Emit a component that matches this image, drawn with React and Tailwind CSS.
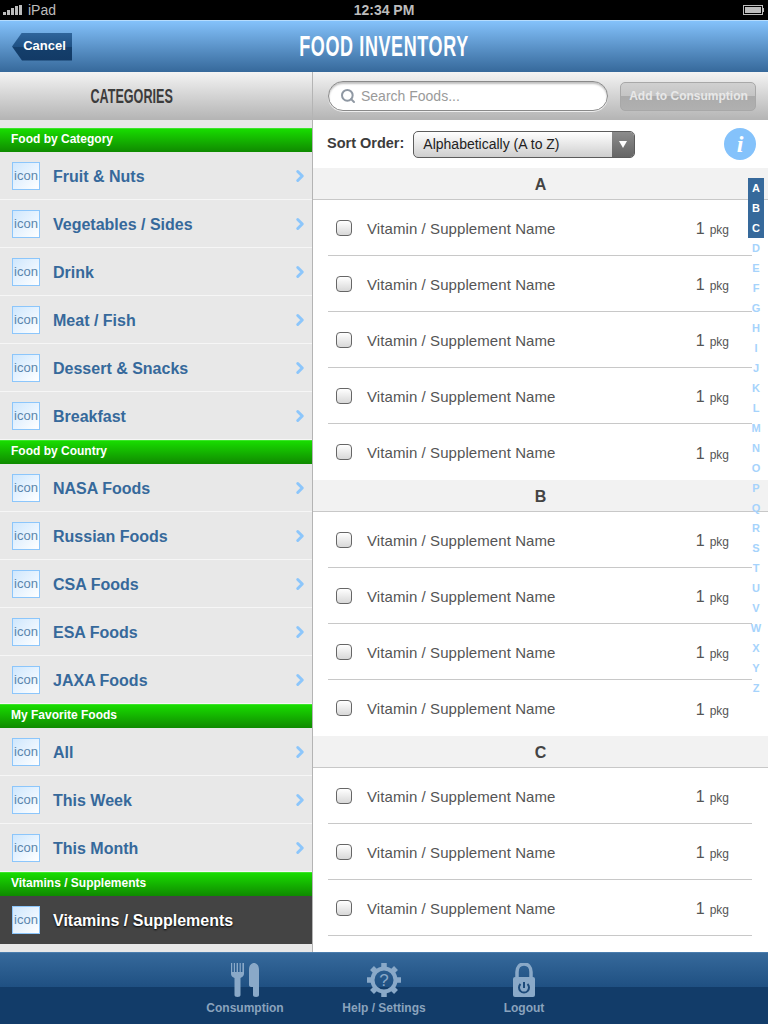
import React from "react";
import { Search, ChevronRight } from "lucide-react";

const font = "font-['Liberation_Sans',Arial,sans-serif]";

const sidebar = [
  { title: "Food by Category", items: ["Fruit & Nuts", "Vegetables / Sides", "Drink", "Meat / Fish", "Dessert & Snacks", "Breakfast"] },
  { title: "Food by Country", items: ["NASA Foods", "Russian Foods", "CSA Foods", "ESA Foods", "JAXA Foods"] },
  { title: "My Favorite Foods", items: ["All", "This Week", "This Month"] },
];

const sections = [
  { letter: "A", rows: 5, closed: false },
  { letter: "B", rows: 4, closed: false },
  { letter: "C", rows: 3, closed: true },
];

const letters = "ABCDEFGHIJKLMNOPQRSTUVWXYZ".split("");

const IconBox = () => (
  <div className="w-[28px] h-[28px] shrink-0 border border-[#8cc6fb] bg-gradient-to-br from-[#cfe7fd] to-white flex items-center justify-center text-[13px] text-[#5b86ad]">
    icon
  </div>
);

const SectionBar = ({ title }) => (
  <div className="h-[24px] shrink-0 pl-[11px] pb-[3px] flex items-center border-t border-[#3be52a] bg-gradient-to-b from-[#18dc00] to-[#0f8a00] text-[12px] font-bold text-white">
    {title}
  </div>
);

const CategoryRow = ({ label }) => (
  <div className="h-[48px] flex items-center pl-[12px] pr-[3px] border-b border-[#f6f6f6]">
    <IconBox />
    <span className="ml-[13px] mt-[2px] flex-1 text-[16px] font-bold text-[#36699b]">{label}</span>
    <ChevronRight size={18} strokeWidth={4} className="text-[#8cc6fb]" />
  </div>
);

const FoodRow = ({ divider }) => (
  <div className={`h-[56px] ml-[15px] mr-[16px] flex items-center text-[#555] ${divider ? "border-b border-[#c8c8c8]" : ""}`}>
    <div className="ml-[8px] w-[16px] h-[16px] rounded-[4px] border border-[#666] bg-gradient-to-b from-white to-[#d8d8d8]" />
    <span className="ml-[15px] mt-[3px] flex-1 text-[15px] tracking-[0.08px]">Vitamin / Supplement Name</span>
    <span className="text-[16px] mt-[3px]">1</span>
    <span className="ml-[5px] mr-[23px] text-[12px] mt-[5px]">pkg</span>
  </div>
);

const ForkKnife = () => (
  <svg width="28" height="34" viewBox="0 0 28 34" fill="#8aa9c8">
    <path d="M0 0h1.200v9h1.600V0H4v9h1.600V0H7v9h1.600V0h1.200v9h1.600V0H13v11c0 2-2 3-3.500 4v17c0 1-1 2-3 2s-3-1-3-2V15C1.500 14 0 13 0 11z" />
    <path d="M18 7c0-5 2.500-7 5-7s5 2 5 7v25c0 1-1 2-3 2s-3-1-3-2V24h-2c-1 0-2-1-2-2z" />
  </svg>
);

const Gear = () => (
  <svg width="36" height="36" viewBox="0 0 36 36">
    <path d="M18 1v6M18 29v6M1 18h6M29 18h6M6 6l4 4M30 6l-4 4M6 30l4-4M30 30l-4-4" stroke="#8aa9c8" strokeWidth="5.500" />
    <circle cx="18" cy="18" r="11.500" fill="none" stroke="#8aa9c8" strokeWidth="4" />
    <text x="18" y="24" textAnchor="middle" fontSize="17" fontFamily="Liberation Sans" fill="#8aa9c8">?</text>
  </svg>
);

const Lock = () => (
  <svg width="24" height="34" viewBox="0 0 24 34">
    <path d="M5 15V9c0-5 3-8 7-8s7 3 7 8v6" fill="none" stroke="#8aa9c8" strokeWidth="3.500" />
    <rect x="1" y="14" width="22" height="20" rx="2" fill="#8aa9c8" />
    <path d="M8.500 21a5 5 0 1 0 7 0" fill="none" stroke="#1c4a7a" strokeWidth="2" />
    <path d="M12 19v6" stroke="#1c4a7a" strokeWidth="2" />
  </svg>
);

const TabItem = ({ width, label, children }) => (
  <div className={`flex flex-col items-center ${width}`}>
    <div className="h-[36px] flex items-center">{children}</div>
    <span className="mt-[1px] text-[12px] font-bold text-[#8aa3bd]">{label}</span>
  </div>
);

export default function App() {
  return (
    <div className={`${font} relative w-[768px] h-[1024px] overflow-hidden flex flex-col bg-white`}>
      {/* status bar */}
      <div className="h-[20px] shrink-0 bg-black flex items-center justify-between px-[3px] text-[14px] text-[#bcbcbc] relative">
        <div className="flex items-center">
          <div className="flex items-end gap-[1px] h-[10px]">
            <div className="w-[3px] h-[3px] bg-[#bcbcbc]" />
            <div className="w-[3px] h-[5px] bg-[#bcbcbc]" />
            <div className="w-[3px] h-[7px] bg-[#bcbcbc]" />
            <div className="w-[3px] h-[9px] bg-[#bcbcbc]" />
            <div className="w-[3px] h-[10px] bg-[#bcbcbc]" />
          </div>
          <span className="ml-[6px]">iPad</span>
        </div>
        <span className="absolute left-0 right-0 text-center font-bold">12:34 PM</span>
        <div className="flex items-center mr-[1px]">
          <div className="w-[20px] h-[10px] border border-[#bcbcbc] p-[1px]">
            <div className="w-full h-full bg-[#bcbcbc]" />
          </div>
          <div className="w-[1px] h-[4px] bg-[#bcbcbc]" />
        </div>
      </div>

      {/* nav bar */}
      <div className="h-[52px] shrink-0 relative flex items-center border-t border-[#b5dcfd] bg-gradient-to-b from-[#84c2fb] to-[#36699b]">
        <div className="ml-[12px] w-[60px] h-[28px] pl-[5px] pb-[2px] flex items-center justify-center [clip-path:polygon(0_50%,10px_0,100%_0,100%_100%,10px_100%)] bg-[linear-gradient(#2f659b,#1e5083_50%,#143f6c_50%,#123a66)] text-[13px] font-bold text-white">
          Cancel
        </div>
        <div className="absolute left-0 right-0 top-0 text-center text-[29px] font-bold text-white tracking-[1px] scale-x-[0.62] leading-[50px]">
          FOOD INVENTORY
        </div>
      </div>

      <div className="flex-1 flex min-h-0">
        {/* left column */}
        <div className="w-[313px] shrink-0 flex flex-col bg-[#e8e8e8] border-r border-[#b4b4b4]">
          <div className="h-[48px] shrink-0 flex items-center justify-center pr-[49px] bg-gradient-to-b from-[#f4f4f4] to-[#b4b4b4]">
            <span className="text-[21px] font-bold text-[#3c3c3c] scale-x-[0.6]">CATEGORIES</span>
          </div>
          <div className="h-[8px] shrink-0" />
          {sidebar.map((group) => (
            <div key={group.title}>
              <SectionBar title={group.title} />
              {group.items.map((item) => (
                <CategoryRow key={item} label={item} />
              ))}
            </div>
          ))}
          <SectionBar title="Vitamins / Supplements" />
          <div className="h-[48px] shrink-0 flex items-center pl-[12px] bg-[#444444]">
            <IconBox />
            <span className="ml-[13px] mt-[2px] text-[16px] font-bold text-white [text-shadow:0_1px_2px_#000]">
              Vitamins / Supplements
            </span>
          </div>
        </div>

        {/* right column */}
        <div className="flex-1 min-w-0 flex flex-col">
          <div className="h-[48px] shrink-0 flex items-center pl-[15px] pr-[12px] bg-gradient-to-b from-[#f4f4f4] to-[#b4b4b4]">
            <div className="w-[280px] h-[30px] rounded-full bg-white border border-[#8a8a8a] shadow-[inset_0_2px_2px_rgba(0,0,0,0.25),0_1px_0_#eee] flex items-center pl-[11px] text-[14px] text-[#9a9a9a]">
              <Search size={16} strokeWidth={3} className="text-[#8f98a3]" />
              <span className="ml-[5px]">Search Foods...</span>
            </div>
            <div className="ml-[12px] w-[136px] h-[29px] rounded-[5px] border border-[#a8a8a8] bg-[linear-gradient(#d0d0d0,#c4c4c4_50%,#ababab_50%,#b0b0b0)] flex items-center justify-center pl-[1px] text-[12px] font-bold text-[#e8e8e8]">
              Add to Consumption
            </div>
          </div>

          <div className="h-[48px] shrink-0 flex items-center pl-[14px] pr-[12px]">
            <span className="text-[14.500px] font-bold text-[#3c3c3c]">Sort Order:</span>
            <div className="ml-[9px] w-[222px] h-[27px] flex rounded-[5px] border border-[#5c5c5c] overflow-hidden bg-gradient-to-b from-white to-[#cfcfcf]">
              <span className="flex-1 pl-[9px] text-[14px] leading-[25px] text-[#222]">Alphabetically (A to Z)</span>
              <div className="w-[22px] bg-gradient-to-b from-[#8c8c8c] to-[#666] flex items-center justify-center">
                <div className="w-0 h-0 border-x-[4px] border-x-transparent border-t-[7px] border-t-white" />
              </div>
            </div>
            <div className="ml-auto w-[32px] h-[32px] rounded-full bg-[#84c2fb] flex items-center justify-center font-['Liberation_Serif',serif] italic font-bold text-[24px] text-white">
              i
            </div>
          </div>

          <div className="flex-1 min-h-0 overflow-hidden">
            {sections.map((section) => (
              <div key={section.letter}>
                <div className="h-[32px] pt-[2px] flex items-center justify-center bg-[#f2f2f2] border-b border-[#c8c8c8] text-[16px] font-bold text-[#444]">
                  {section.letter}
                </div>
                {Array.from({ length: section.rows }).map((_, i) => (
                  <FoodRow key={i} divider={section.closed || i < section.rows - 1} />
                ))}
              </div>
            ))}
          </div>
        </div>
      </div>

      {/* alphabet index over the list */}
      <div className="absolute left-[748px] top-[178px] w-[16px] flex flex-col items-center text-[11px] font-bold leading-[20px] text-[#a6d3fc]">
        {letters.map((letter, i) => (
          <span key={letter} className={i < 3 ? "w-full text-center bg-[#36699b] text-white" : ""}>
            {letter}
          </span>
        ))}
      </div>

      {/* tab bar */}
      <div className="h-[72px] shrink-0 flex pt-[9px] pl-[168px] border-t border-[#4a7dae] bg-[linear-gradient(#36699b,#1f5082_48%,#123c69_48%,#123c69)]">
        <TabItem width="w-[154px]" label="Consumption"><ForkKnife /></TabItem>
        <TabItem width="w-[124px]" label="Help / Settings"><Gear /></TabItem>
        <TabItem width="w-[156px]" label="Logout"><Lock /></TabItem>
      </div>
    </div>
  );
}
